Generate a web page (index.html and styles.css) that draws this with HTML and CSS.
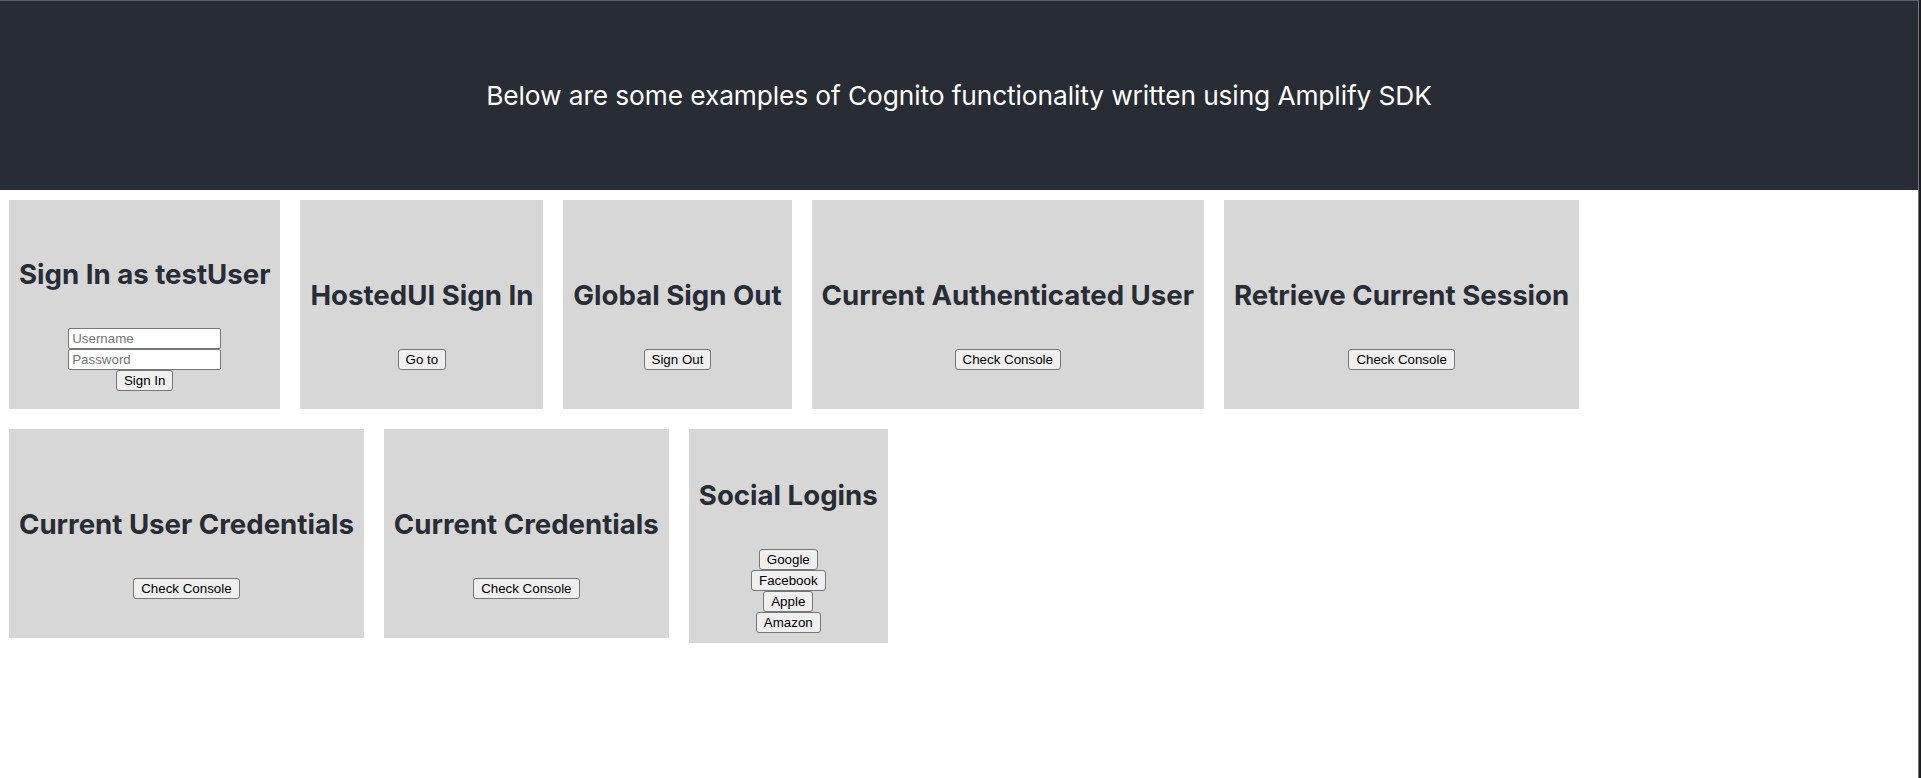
FILE: index.html
```html
<!DOCTYPE html>
<html lang="en">
<head>
<meta charset="utf-8">
<title>Cognito examples</title>
<link rel="stylesheet" href="styles.css">
</head>
<body>
<div class="app">
  <header class="app-header">
    <p class="intro">Below are some examples of Cognito functionality written using Amplify SDK</p>
  </header>
  <main class="cards">
    <div class="card-row">
      <section class="card">
        <h1 class="card-title">Sign In as testUser</h1>
        <div class="controls">
          <input class="field" type="text" placeholder="Username">
          <input class="field" type="password" placeholder="Password">
          <button class="btn" type="button">Sign In</button>
        </div>
      </section>
      <section class="card">
        <h1 class="card-title">HostedUI Sign In</h1>
        <div class="controls">
          <button class="btn" type="button">Go to</button>
        </div>
      </section>
      <section class="card">
        <h1 class="card-title">Global Sign Out</h1>
        <div class="controls">
          <button class="btn" type="button">Sign Out</button>
        </div>
      </section>
      <section class="card">
        <h1 class="card-title">Current Authenticated User</h1>
        <div class="controls">
          <button class="btn" type="button">Check Console</button>
        </div>
      </section>
      <section class="card">
        <h1 class="card-title">Retrieve Current Session</h1>
        <div class="controls">
          <button class="btn" type="button">Check Console</button>
        </div>
      </section>
    </div>
    <div class="card-row">
      <section class="card">
        <h1 class="card-title">Current User Credentials</h1>
        <div class="controls">
          <button class="btn" type="button">Check Console</button>
        </div>
      </section>
      <section class="card">
        <h1 class="card-title">Current Credentials</h1>
        <div class="controls">
          <button class="btn" type="button">Check Console</button>
        </div>
      </section>
      <section class="card">
        <h1 class="card-title">Social Logins</h1>
        <div class="controls">
          <button class="btn" type="button">Google</button>
          <button class="btn" type="button">Facebook</button>
          <button class="btn" type="button">Apple</button>
          <button class="btn" type="button">Amazon</button>
        </div>
      </section>
    </div>
  </main>
</div>
</body>
</html>
```
FILE: styles.css
```css
html {
  background: #1c1d21;
  height: 100%;
}

body {
  margin: 0 2px 0 0;
  min-height: 100%;
  box-sizing: border-box;
  background: #ffffff;
  border-top: 1px solid #5d5e63;
  border-right: 1px solid #7a7b80;
  font-family: Inter, "Liberation Sans", sans-serif;
}

.app {
  text-align: center;
}

.app-header {
  height: 189px;
  background: #282c34;
  display: flex;
  align-items: center;
  justify-content: center;
}

.intro {
  margin: 0;
  color: #ffffff;
  font-family: Inter, sans-serif;
  font-size: 26.3px;
  font-weight: 400;
  letter-spacing: -0.1px;
}

.cards {
  display: flex;
  flex-direction: column;
  gap: 20px;
  padding: 10px 0 0 9px;
}

.card-row {
  display: flex;
  align-items: flex-start;
  gap: 20px;
}

.card {
  box-sizing: border-box;
  min-height: 209px;
  padding: 10px;
  background: #d7d7d7;
  display: flex;
  flex-direction: column;
  justify-content: center;
  align-items: center;
}

.card-title {
  margin: 40px 0 38px;
  font-family: Inter, sans-serif;
  font-size: 27.62px;
  font-weight: 700;
  line-height: 32px;
  color: #282c34;
  white-space: nowrap;
}

.controls {
  display: flex;
  flex-direction: column;
  align-items: center;
}

.field {
  box-sizing: border-box;
  width: 153px;
  height: 21px;
  margin: 0;
  padding: 1px 3px;
  border: 1px solid #767676;
  border-radius: 2px;
  background: #ffffff;
  font-family: "Liberation Sans", Arial, sans-serif;
  font-size: 13.33px;
  color: #000;
}

.field::placeholder {
  color: #757575;
}

.btn {
  box-sizing: border-box;
  height: 21px;
  margin: 0;
  padding: 1px 7px;
  border: 1px solid #767676;
  border-radius: 3px;
  background: #efefef;
  font-family: "Liberation Sans", Arial, sans-serif;
  font-size: 13.33px;
  color: #000;
  line-height: 17px;
}
```
